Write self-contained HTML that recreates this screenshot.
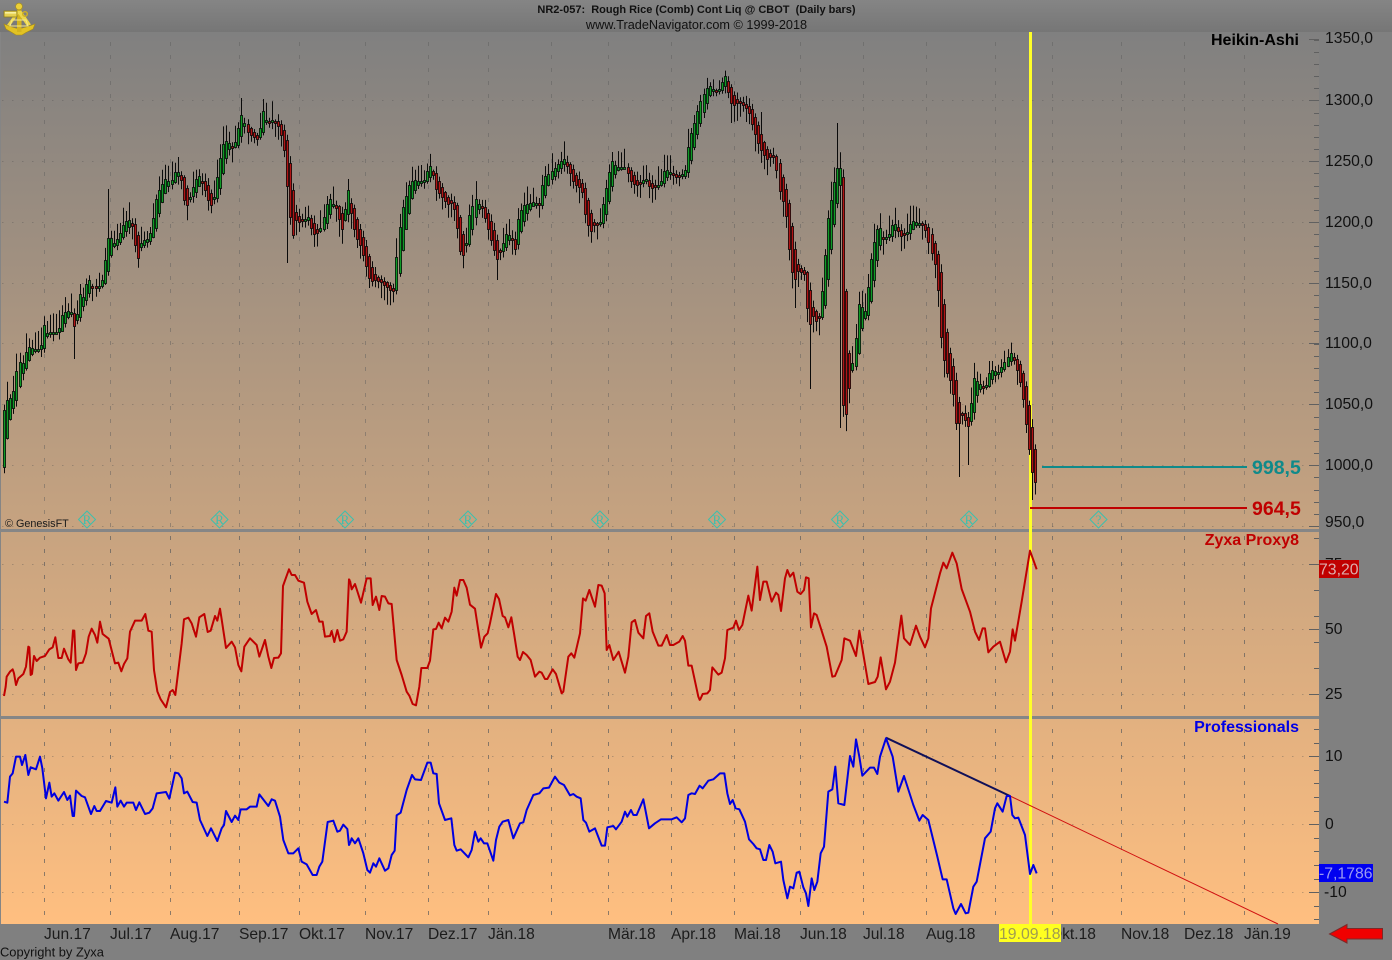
<!DOCTYPE html>
<html><head><meta charset="utf-8"><title>Rough Rice</title>
<style>
html,body{margin:0;padding:0;background:#808080;width:1392px;height:960px;overflow:hidden}
svg{position:absolute;left:0;top:0;display:block}
text{font-family:"Liberation Sans",Arial,sans-serif;white-space:pre}
</style></head><body>
<svg width="1392" height="960" viewBox="0 0 1392 960" xmlns="http://www.w3.org/2000/svg">
<defs>
<linearGradient id="bg" x1="0" y1="0" x2="0" y2="1"><stop offset="0" stop-color="#808080"/><stop offset="1" stop-color="#ffbf80"/></linearGradient>
<linearGradient id="top" x1="0" y1="0" x2="0" y2="1"><stop offset="0" stop-color="#858585"/><stop offset="1" stop-color="#767676"/></linearGradient>
</defs>
<rect width="1392" height="960" fill="#808080"/>
<rect width="1392" height="32" fill="url(#top)"/>
<rect x="1319" y="32" width="73" height="928" fill="#808080"/>
<rect x="0" y="32" width="1319" height="892" fill="url(#bg)"/>
<rect x="0" y="32" width="1" height="892" fill="#858585"/>
<g id="grid"></g>
<rect x="0" y="529" width="1319" height="3" fill="#868686"/>
<rect x="0" y="716" width="1319" height="3" fill="#868686"/>

<!-- yellow cursor -->
<rect x="1029" y="32" width="3" height="892" fill="#ffff28"/>

<!-- logo -->
<g>
<path d="M4 24L10 26.5L19 29L28 26.5L35 24L33 29L26 32.5L22 35H16L12 32.5L6 29Z" fill="#e2c224" stroke="#a88c18" stroke-width=".6"/>
<path d="M17 8H21.5V32H17Z" fill="#d4b41e"/>
<path d="M17 11L7 25L10 26L18.5 14L27 26L31 24.5L21.5 11Z" fill="#ecd64a"/>
<path d="M12 20H26L28 26H10Z" fill="none" stroke="#f6e888" stroke-width="1"/>
<rect x="4" y="11" width="13" height="6" fill="#e6d050" stroke="#8c7a1c" stroke-width=".8"/>
<rect x="5" y="12" width="11" height="1.6" fill="#f8f0a0"/>
<circle cx="19" cy="6.5" r="3.4" fill="#ecd038" stroke="#a89020" stroke-width=".7"/>
<circle cx="25" cy="14" r="2.3" fill="none" stroke="#d0b020" stroke-width="1.4"/>
</g>

<!-- titles -->
<text x="696.5" y="13" font-size="11" font-weight="bold" fill="#111" text-anchor="middle">NR2-057:  Rough Rice (Comb) Cont Liq @ CBOT  (Daily bars)</text>
<text x="696.5" y="29" font-size="12.7" fill="#111" text-anchor="middle">www.TradeNavigator.com © 1999-2018</text>

<text x="1299" y="45" font-size="16" font-weight="bold" fill="#000" text-anchor="end">Heikin-Ashi</text>
<text x="1299" y="545" font-size="16" font-weight="bold" fill="#c00000" text-anchor="end">Zyxa Proxy8</text>
<text x="1299" y="732" font-size="16" font-weight="bold" fill="#0000e6" text-anchor="end">Professionals</text>
<text x="5" y="527" font-size="10.8" fill="#1a1a1a">© GenesisFT</text>

<!-- diamonds -->
<g id="dia" fill="none" stroke="#3cc0ae" stroke-width="1"></g>

<!-- levels -->
<path d="M1042 467H1247" stroke="#0f8a8a" stroke-width="2"/>
<path d="M1030 508H1247" stroke="#c00000" stroke-width="2"/>
<text x="1252" y="474" font-size="19.5" font-weight="bold" fill="#0f8a8a">998,5</text>
<text x="1252" y="515" font-size="19.5" font-weight="bold" fill="#c00000">964,5</text>

<!-- candles -->
<g id="wicks"></g>
<g id="bodies"></g>

<!-- red oscillator -->
<g fill="none" stroke="#c00000" stroke-width="6" stroke-linejoin="round">
<polyline transform="translate(0,530) scale(.33333)" points="12,498 17,470 20,440 30,425 38,418 42,430 48,465 55,445 70,432 78,410 85,350 88,352 92,435 96,432 102,378 110,393 120,383 135,378 148,358 158,352 166,322 175,384 185,384 192,356 205,388 212,398 219,302 223,302 228,420 235,400 248,398 258,370 266,320 275,296 285,315 292,338 300,275 308,312 326,326 345,400 355,398 364,424 372,402 382,385 390,305 405,272 425,272 436,252 445,302 455,305 462,420 472,484 482,508 498,532 510,486 518,480 526,495 545,340 552,268 565,263 575,280 588,320 598,262 613,252 623,306 632,302 645,258 652,272 660,236 665,268 678,354 695,335 705,352 715,405 724,424 733,350 750,325 770,345 778,380 795,330 805,380 814,414 822,384 835,383 843,370 849,168 867,118 875,135 885,135 895,152 912,158 922,215 935,252 948,240 958,275 968,275 975,320 990,318 995,303 1003,336 1012,300 1020,332 1030,328 1040,305 1047,148 1050,152"/>
<polyline transform="translate(350,530) scale(.33333)" points="0,152 5,178 15,162 33,218 50,145 62,145 68,225 78,200 88,240 95,198 105,200 115,220 125,222 140,390 155,435 170,485 178,497 188,522 198,526 208,470 214,414 232,414 240,392 250,298 258,297 266,278 275,295 285,263 295,275 305,245 313,173 320,197 330,150 340,150 350,173 360,224 375,236 393,353 403,320 413,310 420,280 438,192 447,207 458,258 465,262 475,292 484,262 492,310 503,380 510,390 519,366 530,375 542,390 555,440 568,425 575,428 585,447 592,447 608,418 618,432 635,490 640,485 655,380 664,370 673,383 690,310 699,205 707,212 718,180 735,230 745,165 755,167 764,190 770,360 778,345 790,390 806,365 825,428 835,380 845,277 855,270 865,308 880,325 888,258 898,250 908,305 925,347 935,347 950,315 960,345 970,345 988,335 998,318 1005,332 1015,407 1025,407 1045,500 1050,512"/>
<polyline transform="translate(700,530) scale(.33333)" points="0,510 8,492 22,490 30,480 37,412 55,434 65,428 75,385 82,300 100,293 108,272 117,300 127,285 145,197 155,242 172,110 180,210 190,155 200,155 215,215 228,188 235,195 243,243 255,145 262,120 270,140 280,128 292,185 302,192 312,180 318,142 326,145 333,292 342,250 350,255 380,350 397,440 405,438 425,390 433,325 450,332 468,378 478,302 505,462 525,456 533,440 542,382 558,478 570,455 585,398 604,257 612,325 630,345 648,287 660,320 675,352 685,325 693,235 720,130 730,98 740,115 757,68 770,100 785,177 810,245 825,305 837,330 848,295 855,295 865,367 880,350 900,335 918,397 930,365 938,298 945,332 965,215 990,62 1010,118"/>
</g>

<!-- trend lines -->
<path d="M1010 796L1278 924" stroke="#d01010" stroke-width="1" fill="none"/>
<path d="M886 737.7L1010 796" stroke="#101058" stroke-width="2" fill="none"/>

<!-- blue oscillator -->
<g fill="none" stroke="#0000e0" stroke-width="6" stroke-linejoin="round">
<polyline transform="translate(0,530) scale(.33333)" points="12,815 22,818 30,740 38,730 48,680 60,680 66,705 76,675 85,735 92,712 108,718 120,680 127,715 138,805 148,758 155,800 163,790 175,812 192,786 202,810 210,797 218,858 222,858 228,782 245,798 255,802 273,852 283,828 290,843 300,843 318,813 335,818 346,772 352,830 362,812 372,830 380,818 400,818 408,840 418,817 435,852 448,848 458,835 470,790 498,786 508,806 525,728 535,730 545,745 552,790 562,785 578,816 590,818 600,870 622,918 633,895 652,933 665,895 672,885 678,843 695,876 705,857 715,870 722,838 740,838 750,830 770,830 778,793 805,828 815,808 825,812 840,860 850,930 865,970 880,970 895,955 905,995 920,1003 938,1035 950,1035 958,1010 967,995 983,876 1000,872 1012,905 1020,902 1030,884 1042,897 1047,945 1050,940"/>
<polyline transform="translate(350,530) scale(.33333)" points="0,940 5,925 15,940 25,925 40,970 52,1020 60,1028 70,1000 78,1010 88,985 105,1022 115,1015 125,975 134,962 140,856 152,848 170,780 186,735 195,748 213,750 232,698 242,698 250,730 260,732 267,820 285,870 304,865 313,945 320,962 332,958 355,982 365,960 375,905 385,935 392,925 402,940 412,940 430,992 438,930 448,890 458,875 475,870 490,925 510,880 520,877 530,840 550,795 568,790 580,775 597,773 615,740 628,758 642,765 660,796 670,792 680,800 692,805 700,870 708,878 718,905 735,895 755,947 765,947 772,892 790,888 798,898 815,875 825,845 832,860 843,840 850,855 860,855 880,808 897,895 915,880 933,868 965,868 980,862 995,877 1005,865 1015,795 1025,790 1035,792 1050,765"/>
<polyline transform="translate(700,530) scale(.33333)" points="0,768 8,775 25,752 40,748 60,730 73,730 82,790 90,822 98,810 107,835 118,838 135,875 147,928 160,942 170,955 180,958 190,990 198,990 208,945 218,965 226,1000 243,995 250,1050 262,1105 270,1070 280,1075 290,1028 298,1025 310,1072 318,1090 325,1128 335,1045 343,1080 352,1055 362,970 372,950 385,785 397,778 406,710 415,820 433,825 450,678 460,710 468,628 478,680 487,737 510,713 522,713 532,732 540,680 558,625 578,680 595,785 612,738 640,825 658,872 668,855 685,870 712,980 728,1048 740,1048 760,1135 767,1152 783,1122 797,1150 805,1148 820,1070 830,1055 855,925 872,905 885,835 892,820 908,845 920,798 930,798 937,855 945,865 955,863 975,915 990,1032 1000,1005 1010,1030"/>
</g>

<!-- axis labels -->
<g font-size="15.7" fill="#111">
<text x="1325" y="43">1350,0</text>
<text x="1325" y="105">1300,0</text>
<text x="1325" y="166">1250,0</text>
<text x="1325" y="227">1200,0</text>
<text x="1325" y="288">1150,0</text>
<text x="1325" y="348">1100,0</text>
<text x="1325" y="409">1050,0</text>
<text x="1325" y="470">1000,0</text>
<text x="1325" y="527">950,0</text>
<text x="1325" y="569">75</text>
<text x="1325" y="634">50</text>
<text x="1325" y="699">25</text>
<text x="1325" y="761">10</text>
<text x="1325" y="829">0</text>
<text x="1324" y="897">-10</text>
</g>
<rect x="1319" y="560" width="40" height="18" fill="#c00000"/>
<text x="1319" y="574.5" font-size="15.8" fill="#dcaeae">73,20</text>
<rect x="1319" y="864" width="54" height="18" fill="#0000f0"/>
<text x="1319" y="878.5" font-size="15.8" fill="#9a9af0">-7,1786</text>

<!-- date labels -->
<g font-size="15.6" fill="#1c1c1c">
<text x="44" y="939">Jun.17</text>
<text x="110" y="939">Jul.17</text>
<text x="170" y="939">Aug.17</text>
<text x="239" y="939">Sep.17</text>
<text x="299" y="939">Okt.17</text>
<text x="365" y="939">Nov.17</text>
<text x="428" y="939">Dez.17</text>
<text x="488" y="939">Jän.18</text>
<text x="608" y="939">Mär.18</text>
<text x="671" y="939">Apr.18</text>
<text x="734" y="939">Mai.18</text>
<text x="800" y="939">Jun.18</text>
<text x="863" y="939">Jul.18</text>
<text x="926" y="939">Aug.18</text>
<text x="1050" y="939">Okt.18</text>
<text x="1121" y="939">Nov.18</text>
<text x="1184" y="939">Dez.18</text>
<text x="1244" y="939">Jän.19</text>
</g>
<rect x="999" y="924" width="62" height="18" fill="#ffff20"/>
<text x="999" y="939" font-size="15.8" fill="#a09c50">19.09.18</text>

<!-- arrow -->
<path d="M1329.5 934L1347 924.5V928.5H1382.5V939H1347V943Z" fill="#f00000" stroke="#7a2a2a" stroke-width="1"/>

<text x="0" y="956.5" font-size="12.9" fill="#111">Copyright by Zyxa</text>
</svg>
<script>
(function(){
var pts=[];
function add(ox,oy,a){for(var i=0;i<a.length;i+=2)pts.push([ox+a[i]/3,oy+a[i+1]/3]);}
add(0,80,[13,990,22,960,32,955,42,930,50,870,58,845,68,850,78,812,88,800,108,810,122,800,130,730,140,758,175,755,185,705,200,690,215,698,220,750,232,700,240,640,250,650,265,590,275,620,295,620,310,590,318,490,328,460,338,495,355,470,370,432,385,415,398,440,405,495,412,545,425,480,445,478,455,445,470,350,482,320,498,295,510,310,526,270,540,285,552,365,562,378,572,340,590,290,600,285,615,330,630,380,640,365,660,235,670,190,682,180,697,205,710,180,722,100,734,130,745,165,770,175,780,140,788,92,800,128,815,120,830,130,850,185,858,280,866,375,878,470,888,420,900,428,925,410,940,465,958,455,972,405,985,350,1000,375,1012,390,1022,455,1032,425,1040,302]);
add(350,60,[0,445,15,525,30,555,45,605,60,665,80,660,100,670,120,690,132,693,142,555,155,450,165,415,175,375,190,358,210,365,225,360,235,315,245,320,255,385,275,410,290,430,310,430,320,490,330,570,345,590,358,465,375,415,395,445,410,495,425,550,440,600,455,560,470,515,490,545,495,568,505,470,520,435,550,425,570,435,580,350,600,340,625,310,640,295,655,330,670,365,695,390,705,460,720,520,730,495,750,490,760,430,775,350,785,300,800,320,825,320,845,370,865,375,885,352,900,385,930,372,945,325,965,340,985,355,1005,335,1018,240,1030,200]);
add(690,60,[30,125,42,98,55,75,75,95,90,85,103,40,113,95,125,135,150,128,175,150,190,205,210,265,230,295,255,290,265,380,285,450,298,590,310,670,325,630,345,645,355,820,365,760,385,795,400,660,412,490,430,380,445,310,455,335,460,1035,470,1065,480,965,495,855,505,730,525,755,545,570,565,490,580,540,600,520,610,480,630,530,650,520,665,480,695,490,705,505,725,580,740,640,750,815,765,930,785,970,800,1115,815,1060,835,1100,852,955,870,970,885,990,900,930,925,935,945,905,960,875,975,910,995,990,1015,1155,1030,1270,1040,1265]);
function yAt(x){
  if(x<=pts[0][0])return pts[0][1];
  for(var i=1;i<pts.length;i++){
    if(x<=pts[i][0]){var a=pts[i-1],b=pts[i],d=b[0]-a[0];return d<=0?b[1]:a[1]+(b[1]-a[1])*(x-a[0])/d;}
  }
  return pts[pts.length-1][1];
}
var forced=[[73,359],[109,189],[286,263],[811,389],[838,123],[958,477],[967,465],[135,225],[240,98],[262,100],[496,280],[839,428],[846,428],[730,123],[760,112],[795,308],[810,312],[1033,500],[1037,495]];
var seed=12345;
function rnd(){seed=(seed*16807)%2147483647;return seed/2147483647;}
var w='',b='',po=466.5,pc=466.5;
for(var i=0;i<340;i++){
  var x=4.33+i*3.04,X=Math.round(x),y=yAt(x);
  var o=i==0?466.5:(po+pc)/2;
  var top=Math.min(o,y),bot=Math.max(o,y),up=y<o;
  if(bot-top<1.5){bot=top+1.5;}
  var hi=top-(up?4+rnd()*15:1+rnd()*7),lo=bot+(up?1+rnd()*7:4+rnd()*14);
  for(var k=0;k<forced.length;k++){
    if(Math.abs(forced[k][0]-X)<=1.5){
      if(forced[k][1]<top)hi=Math.min(hi,forced[k][1]);else if(forced[k][1]>bot)lo=Math.max(lo,forced[k][1]);
    }
  }
  w+='M'+(X+.5)+' '+hi.toFixed(1)+'V'+lo.toFixed(1);
  b+='<rect x="'+(X-.6)+'" y="'+(Math.round(top)+.5)+'" width="2.2" height="'+Math.max(1,Math.round(bot-top))+'" fill="'+(up?'#0f9a26':'#b01515')+'" stroke="#080808" stroke-width=".75"/>';
  po=o;pc=y;
}
document.getElementById('wicks').innerHTML='<path d="'+w+'" stroke="#0a0a0a" stroke-width="1" fill="none"/>';
document.getElementById('bodies').innerHTML=b;

var vx=[44.5,110.5,170.5,239.5,299.5,365.5,428.5,488.5,551.5,608.5,671.5,734.5,800.5,863.5,926.5,995.5,1052.5,1121.5,1184.5,1244.5];
var g='',d1='',d2='',d3='';
vx.forEach(function(x){d1+='M'+x+' 42V528';d2+='M'+x+' 536V716';d3+='M'+x+' 729V924';});
var col='#5c5c5c';
g+='<path d="'+d1+'" stroke="'+col+'" stroke-opacity=".45" stroke-dasharray="4 9" fill="none"/>';
g+='<path d="'+d2+'" stroke="'+col+'" stroke-opacity=".7" stroke-dasharray="4 9" fill="none"/>';
g+='<path d="'+d3+'" stroke="'+col+'" stroke-opacity=".7" stroke-dasharray="4 9" fill="none"/>';
var hs=[100,161,222,283,343,404,465,526,564,629,694,756,824,892];
var h='',t='';
hs.forEach(function(y){h+='M2 '+(y+.5)+'H1309';t+='M1309 '+(y+.5)+'H1319';});
t+='M1309 39.5H1319';
g+='<path d="'+h+'" stroke="#505050" stroke-opacity=".35" stroke-dasharray="1.5 8.5" fill="none"/>';
for(var y=526;y>34;y-=12.16){t+='M1314 '+(Math.round(y)+.5)+'H1319';}
for(var y=538;y<716;y+=26){t+='M1314 '+(y+.5)+'H1319';}
for(var y=729;y<924;y+=13.6){t+='M1314 '+(Math.round(y)+.5)+'H1319';}
g+='<path d="'+t+'" stroke="#606060" fill="none"/>';
document.getElementById('grid').innerHTML=g;

var dx=[87,219.5,345,468,600,717,840,969,1098.5],s='';
dx.forEach(function(x,i){
  s+='<path d="M'+x+' 511L'+(x+8.5)+' 519.5L'+x+' 528L'+(x-8.5)+' 519.5Z"/>';
  s+='<text x="'+x+'" y="524" font-size="13" text-anchor="middle" fill="#3cc0ae" stroke="none" style="font-family:\'Liberation Serif\',serif">'+(i==8?'?':'R')+'</text>';
});
document.getElementById('dia').innerHTML=s;
})();
</script>
</body></html>
